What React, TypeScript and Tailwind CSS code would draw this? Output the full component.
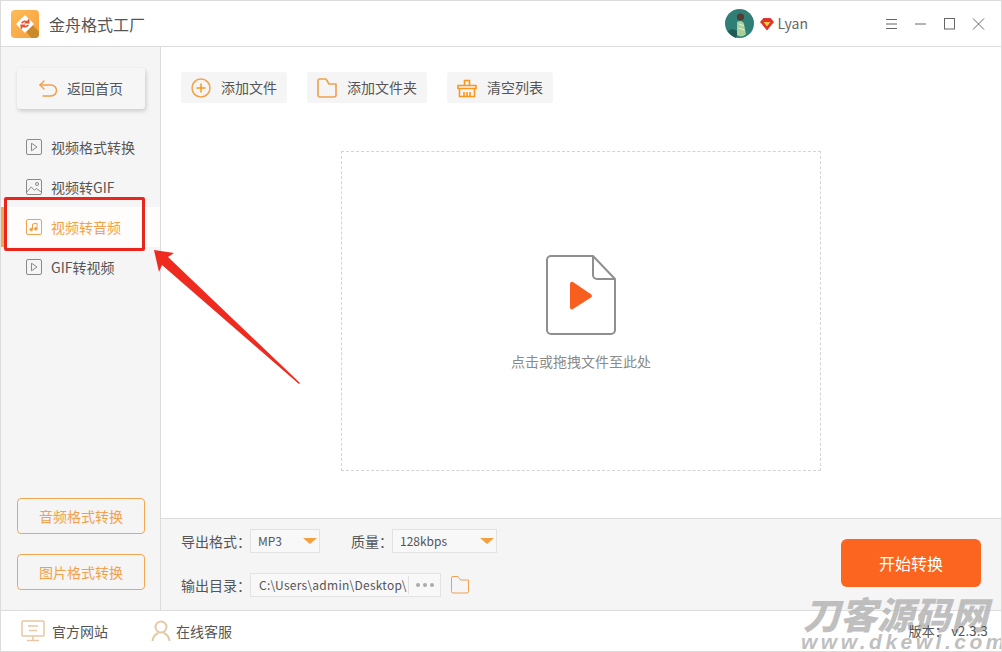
import React from 'react'

const cjk = '"Noto Sans CJK SC", "Noto Sans", sans-serif'

function PlayDoc({ size = 16 }: { size?: number }) {
  return (
    <svg width={size} height={size} viewBox="0 0 16 16" fill="none" stroke="#8a8a8a" strokeWidth="1">
      <rect x="0.5" y="0.5" width="15" height="15" rx="1.5" />
      <path d="M5.5 4.2v7.6L11 8z" strokeLinejoin="round" />
    </svg>
  )
}

function ImageIcon() {
  return (
    <svg width="16" height="16" viewBox="0 0 16 16" fill="none" stroke="#8a8a8a" strokeWidth="1">
      <rect x="0.5" y="0.5" width="15" height="15" rx="1.5" />
      <circle cx="11" cy="5" r="1.5" />
      <path d="M0.8 13l4.4-5 3.3 3.2 2-1.6 4.8 3.6" />
    </svg>
  )
}

function MusicIcon() {
  return (
    <svg width="16" height="16" viewBox="0 0 16 16" fill="none" stroke="#f2a04a" strokeWidth="1">
      <rect x="0.5" y="0.5" width="15" height="15" rx="1.5" />
      <path d="M6.5 10.5V5l4.5-.8v5.6" />
      <circle cx="5.2" cy="10.6" r="1.3" fill="#f2a04a" />
      <circle cx="9.8" cy="9.9" r="1.3" fill="#f2a04a" />
    </svg>
  )
}

function NavItem({ label, icon, active }: { label: string; icon: React.ReactNode; active?: boolean }) {
  return (
    <div
      className={
        active
          ? 'flex h-10 items-center gap-[9px] border-l-[3px] border-[#f5a94e] bg-[#fffdfb] pl-[22px] text-[14px] text-[#f2a04a]'
          : 'flex h-10 items-center gap-[9px] pl-[25px] text-[14px] text-[#555]'
      }
    >
      {icon}
      <span>{label}</span>
    </div>
  )
}

function ToolButton({ label, width, icon }: { label: string; width: string; icon: React.ReactNode }) {
  return (
    <div className={`flex h-[31px] items-center gap-[10px] rounded-[3px] bg-[#f5f5f6] pl-[10px] text-[14px] text-[#555] ${width}`}>
      {icon}
      <span>{label}</span>
    </div>
  )
}

function Logo() {
  return (
    <svg width="28" height="28" viewBox="0 0 28 28">
      <defs>
        <linearGradient id="logoBg" x1="0" y1="0" x2="1" y2="1">
          <stop offset="0" stopColor="#fdbb57" />
          <stop offset="1" stopColor="#f7a03c" />
        </linearGradient>
      </defs>
      <rect width="28" height="28" rx="4" fill="url(#logoBg)" />
      <path d="M14 20.5l6.5-6.5 7.5 7.5V24a4 4 0 0 1-4 4h-3.5z" fill="#c98a2c" />
      <path d="M14 5l9 9-9 9-9-9z" fill="#fff" />
      <path d="M10.8 13.2c.8-1.800 3.200-2.400 5-1.400l-1 1h3l-.3-2.600-.8.8M17.200 14.800c-.8 1.800-3.200 2.400-5 1.400l1-1h-3l.3 2.600.8-.8" fill="none" stroke="#e8502a" strokeWidth="1.6" />
    </svg>
  )
}

function Avatar() {
  return (
    <svg width="29" height="29" viewBox="0 0 29 29">
      <circle cx="14.5" cy="14.5" r="14.5" fill="#2f7f76" />
      <path d="M3 22c4-3 7-2 10 1l-2 6a14 14 0 0 1-8-7z" fill="#1f5a55" />
      <circle cx="15.500" cy="8" r="3.600" fill="#5a3a34" />
      <path d="M12 13c3-2 6-1 7 2l2 10c-2 3-7 3-9 1z" fill="#a9cf9b" />
      <path d="M14 15l5 2M13.500 19l6 2" stroke="#e7f0d8" strokeWidth="1" />
    </svg>
  )
}

export default function App() {
  return (
    <div
      className="relative flex h-[652px] w-[1002px] flex-col overflow-hidden border border-[#dcdcdc] bg-white"
      style={{ fontFamily: cjk }}
    >
      {/* Title bar */}
      <div className="flex h-[46px] shrink-0 items-center border-b border-[#dcdcdc] pl-[10px] pr-[16px]">
        <Logo />
        <span className="ml-[10px] text-[16px] text-[#555]">金舟格式工厂</span>
        <div className="ml-auto flex items-center">
          <Avatar />
          <svg className="ml-[6px]" width="14" height="14" viewBox="0 0 14 14">
            <path d="M3.500 1h7L14 5l-7 8.500L0 5z" fill="#e0342a" />
            <path d="M3.500 5h7L7 9.500z" fill="#f6c543" />
          </svg>
          <span className="ml-[4px] text-[14px] text-[#666]">Lyan</span>
          <div className="ml-[77px] flex items-center gap-[16px]">
            <svg width="13" height="12" viewBox="0 0 13 12" stroke="#666" strokeWidth="1">
              <path d="M1 1.500h11M1 6h11M1 10.500h11" />
            </svg>
            <svg width="13" height="12" viewBox="0 0 13 12" stroke="#666" strokeWidth="1">
              <path d="M1 6h11" />
            </svg>
            <svg width="13" height="12" viewBox="0 0 13 12" fill="none" stroke="#666" strokeWidth="1">
              <rect x="1.500" y="0.500" width="10" height="10.500" />
            </svg>
            <svg width="13" height="12" viewBox="0 0 13 12" stroke="#666" strokeWidth="1">
              <path d="M1 0.500l11 11M12 0.500l-11 11" />
            </svg>
          </div>
        </div>
      </div>

      <div className="flex min-h-0 flex-1">
        {/* Sidebar */}
        <aside className="flex w-[160px] shrink-0 flex-col border-r border-[#dcdcdc] bg-[#f5f5f6]">
          <div className="px-4 pt-[21px]">
            <div className="flex h-[41px] w-[128px] items-center gap-[9px] rounded-[3px] bg-[#f6f6f7] pl-[21px] text-[14px] text-[#555] shadow-[1px_2px_4px_rgba(0,0,0,0.18)]">
              <svg width="20" height="20" viewBox="0 0 20 20" fill="none" stroke="#f2a04a" strokeWidth="1.500" strokeLinecap="round" strokeLinejoin="round">
                <path d="M6 2L2 6l4 4" />
                <path d="M2 6h11a5 5 0 0 1 0 11H5" />
              </svg>
              <span>返回首页</span>
            </div>
          </div>
          <nav className="mt-[18px] flex flex-col">
            <NavItem label="视频格式转换" icon={<PlayDoc />} />
            <NavItem label="视频转GIF" icon={<ImageIcon />} />
            <NavItem label="视频转音频" icon={<MusicIcon />} active />
            <NavItem label="GIF转视频" icon={<PlayDoc />} />
          </nav>
          <div className="mt-auto flex flex-col gap-5 px-4 pb-5">
            <div className="flex h-9 w-[128px] items-center justify-center rounded-[4px] border border-[#f2a64f] text-[14px] text-[#f2a04a]">音频格式转换</div>
            <div className="flex h-9 w-[128px] items-center justify-center rounded-[4px] border border-[#f2a64f] text-[14px] text-[#f2a04a]">图片格式转换</div>
          </div>
        </aside>

        {/* Main */}
        <main className="flex min-w-0 flex-1 flex-col">
          <div className="flex gap-5 pl-5 pt-[25px]">
            <ToolButton
              label="添加文件"
              width="w-[106px]"
              icon={
                <svg width="20" height="20" viewBox="0 0 20 20" fill="none" stroke="#f2a04a" strokeWidth="1.500">
                  <circle cx="10" cy="10" r="9" />
                  <path d="M10 5.500v9M5.500 10h9" stroke="#f9961e" />
                </svg>
              }
            />
            <ToolButton
              label="添加文件夹"
              width="w-[120px]"
              icon={
                <svg width="20" height="20" viewBox="0 0 20 20" fill="none" stroke="#eda050" strokeWidth="1.600" strokeLinejoin="round">
                  <path d="M1 3a2 2 0 0 1 2-2h6l3 5h7v11a2 2 0 0 1-2 2H3a2 2 0 0 1-2-2z" />
                </svg>
              }
            />
            <ToolButton
              label="清空列表"
              width="w-[106px]"
              icon={
                <svg width="20" height="20" viewBox="0 0 20 20" fill="none" stroke="#f9961e" strokeWidth="1.600">
                  <path d="M7.500 7V2.500h5V7" />
                  <path d="M1 7.500h18v3H1z" />
                  <path d="M2.500 10.500V18.500h15V10.500M7 14v4.500M10 14v4.500M13 14v4.500" />
                </svg>
              }
            />
          </div>

          <div className="flex flex-1 items-start pl-[180px] pt-[48px]">
            <div className="flex h-[320px] w-[480px] flex-col items-center border border-dashed border-[#d4d4d4] pt-[103px]">
              <svg width="70" height="80" viewBox="0 0 70 80" fill="none">
                <path d="M47 1H5a4 4 0 0 0-4 4v70a4 4 0 0 0 4 4h60a4 4 0 0 0 4-4V24H51a4 4 0 0 1-4-4V1l22 23" stroke="#8f8f8f" strokeWidth="2" strokeLinejoin="round" />
                <path d="M24 28.500v24a2 2 0 0 0 3 1.600l18-11.500a2 2 0 0 0 0-3.300L27 27a2 2 0 0 0-3 1.500z" fill="#f85f1e" />
              </svg>
              <span className="mt-[16px] text-[14px] text-[#8a8a8a]">点击或拖拽文件至此处</span>
            </div>
          </div>

          {/* Output settings */}
          <div className="relative flex h-[92px] shrink-0 border-t border-[#dcdcdc] bg-[#f5f5f6]">
            <div className="flex flex-col gap-5 pl-5 pt-[10px] text-[14px] text-[#555]">
              <div className="flex h-[24px] items-center">
                <span className="w-[69px] whitespace-nowrap">导出格式：</span>
                <div className="flex h-[24px] w-[70px] items-center justify-between border border-[#e2e2e2] bg-[#f8f8f8] pl-[7px] pr-[1px] text-[12px]">
                  <span>MP3</span>
                  <span className="mr-[1px] h-0 w-0 border-x-[7px] border-t-[6px] border-x-transparent border-t-[#f5a03c]" />
                </div>
                <span className="ml-[31px] w-[41px] whitespace-nowrap">质量：</span>
                <div className="flex h-[24px] w-[105px] items-center justify-between border border-[#e2e2e2] bg-[#f8f8f8] pl-[7px] pr-[1px] text-[12px]">
                  <span>128kbps</span>
                  <span className="mr-[1px] h-0 w-0 border-x-[7px] border-t-[6px] border-x-transparent border-t-[#f5a03c]" />
                </div>
              </div>
              <div className="flex h-[24px] items-center">
                <span className="w-[69px] whitespace-nowrap">输出目录：</span>
                <div className="flex h-[24px] w-[191px] items-center border border-[#e2e2e2] bg-[#f8f8f8] text-[12px]">
                  <span className="w-[158px] whitespace-nowrap border-r border-[#e2e2e2] pl-[8px] tracking-[0.25px]">C:\Users\admin\Desktop\</span>
                  <span className="flex flex-1 justify-center gap-[3px]">
                    <i className="h-[4px] w-[4px] rounded-full bg-[#aaa]" />
                    <i className="h-[4px] w-[4px] rounded-full bg-[#aaa]" />
                    <i className="h-[4px] w-[4px] rounded-full bg-[#aaa]" />
                  </span>
                </div>
                <svg className="ml-[10px]" width="18" height="18" viewBox="0 0 18 18" fill="none" stroke="#eda050" strokeWidth="1" strokeLinejoin="round">
                  <path d="M0.500 2a1.500 1.500 0 0 1 1.500-1.500h5l2.500 3.500h8v11.500a1.500 1.500 0 0 1-1.500 1.500H2a1.500 1.500 0 0 1-1.500-1.500z" />
                </svg>
              </div>
            </div>
            <div className="ml-auto mr-5 mt-[20px] flex h-12 w-[140px] items-center justify-center rounded-[6px] bg-[#fb6520] text-[16px] text-white">开始转换</div>
          </div>
        </main>
      </div>

      {/* Footer */}
      <div className="relative flex h-[41px] shrink-0 items-center border-t border-[#dcdcdc] bg-white pl-5 text-[14px] text-[#555]">
        <svg width="24" height="22" viewBox="0 0 24 22" fill="none" stroke="#e6c9a4" strokeWidth="1.500">
          <rect x="1" y="1" width="22" height="15" rx="1" />
          <path d="M7 6h10M8 10.500h8M12 16v4M6 20.500h12" />
        </svg>
        <span className="ml-[7px]">官方网站</span>
        <svg className="ml-[43px]" width="20" height="22" viewBox="0 0 20 22" fill="none" stroke="#e6c9a4" strokeWidth="2">
          <circle cx="10" cy="7" r="5.500" />
          <path d="M1.500 21c.5-4 3-7 6-8M18.500 21c-.5-4-3-7-6-8" />
        </svg>
        <span className="ml-[5px]">在线客服</span>
        <span className="absolute right-[13px] top-[11px] z-20 text-[13px] leading-[18px] tracking-[0.2px] text-[#555]">版本： v2.3.3</span>
      </div>

      {/* Watermark */}
      <div className="pointer-events-none absolute left-[802px] top-[591px] z-10 whitespace-nowrap text-[37px] font-black italic leading-[42px] text-[#b4b4b4]/85">刀客源码网</div>
      <div className="pointer-events-none absolute left-[800px] top-[630px] z-10 whitespace-nowrap text-[21px] font-bold italic leading-[22px] tracking-[3.5px] text-[#b4b4b4]/85" style={{ fontFamily: '"Liberation Sans", sans-serif' }}>www.dkewl.com</div>

      {/* Red annotation */}
      <div className="pointer-events-none absolute left-[3px] top-[196px] z-30 h-[54px] w-[141px] rounded-[2px] border-[3px] border-[#e8261c]" />
      <svg className="pointer-events-none absolute left-[150px] top-[244px] z-30" width="152" height="144" viewBox="0 0 152 144">
        <path d="M3 5l20 3-6 4 132 126 -1 1L11 20l-3 7z" fill="#ef2b20" />
      </svg>
    </div>
  )
}
